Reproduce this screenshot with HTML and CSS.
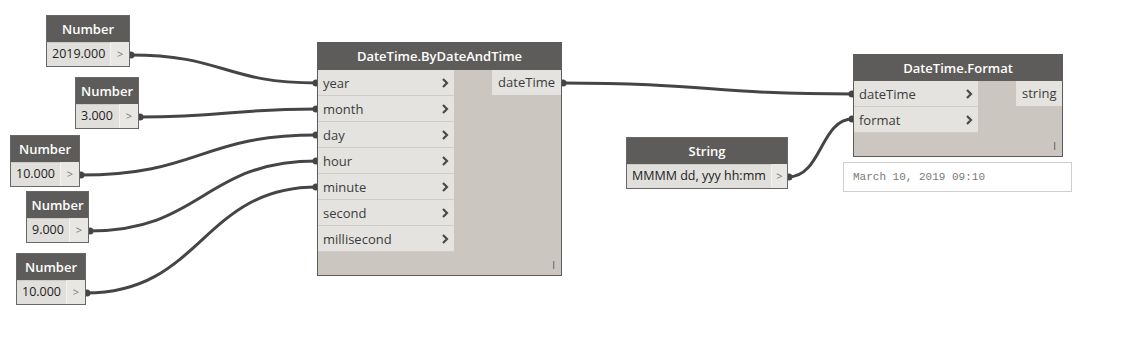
FILE: index.html
```html
<!DOCTYPE html>
<html lang="en">
<head>
    <meta charset="UTF-8">
    <title>Dynamo Graph</title>
    <link rel="stylesheet" href="styles.css">
</head>
<body>
    <div class="canvas">
        <svg class="wires" width="1124" height="352" viewBox="0 0 1124 352">
            <g class="wire">
                <path d="M130 55 C 224 55, 224 83, 317 83"/>
                <path d="M139 117 C 228 117, 228 109, 317 109"/>
                <path d="M80 175 C 200 175, 200 135, 317 135"/>
                <path d="M89 231 C 203 231, 203 161, 317 161"/>
                <path d="M86 293 C 202 293, 202 187, 317 187"/>
                <path d="M562 83 C 708 83, 708 94, 853 94"/>
                <path d="M788 177 C 822 177, 820 119, 853 119"/>
            </g>
            <g class="caps">
                <circle cx="131" cy="55" r="3.5"/>
                <circle cx="140" cy="117" r="3.5"/>
                <circle cx="81" cy="175" r="3.5"/>
                <circle cx="90" cy="231" r="3.5"/>
                <circle cx="87" cy="293" r="3.5"/>
                <circle cx="316" cy="83" r="3.5"/>
                <circle cx="316" cy="109" r="3.5"/>
                <circle cx="316" cy="135" r="3.5"/>
                <circle cx="316" cy="161" r="3.5"/>
                <circle cx="316" cy="187" r="3.5"/>
                <circle cx="563" cy="83" r="3.5"/>
                <circle cx="852" cy="94" r="3.5"/>
                <circle cx="852" cy="119" r="3.5"/>
                <circle cx="789" cy="177" r="3.5"/>
            </g>
        </svg>

        <!-- number inputs -->
        <div class="node num num-1">
            <div class="node-head">Number</div>
            <div class="num-body"><span class="num-value">2019.000</span><span class="num-btn">&gt;</span></div>
        </div>
        <div class="node num num-2">
            <div class="node-head">Number</div>
            <div class="num-body"><span class="num-value">3.000</span><span class="num-btn">&gt;</span></div>
        </div>
        <div class="node num num-3">
            <div class="node-head">Number</div>
            <div class="num-body"><span class="num-value">10.000</span><span class="num-btn">&gt;</span></div>
        </div>
        <div class="node num num-4">
            <div class="node-head">Number</div>
            <div class="num-body"><span class="num-value">9.000</span><span class="num-btn">&gt;</span></div>
        </div>
        <div class="node num num-5">
            <div class="node-head">Number</div>
            <div class="num-body"><span class="num-value">10.000</span><span class="num-btn">&gt;</span></div>
        </div>

        <!-- DateTime.ByDateAndTime -->
        <div class="node func by-date">
            <div class="node-head">DateTime.ByDateAndTime</div>
            <div class="func-body">
                <div class="ports">
                    <div class="port">year<svg class="chev" width="7" height="10" viewBox="0 0 7 10"><polyline points="1,1 5,5 1,9"/></svg></div>
                    <div class="port">month<svg class="chev" width="7" height="10" viewBox="0 0 7 10"><polyline points="1,1 5,5 1,9"/></svg></div>
                    <div class="port">day<svg class="chev" width="7" height="10" viewBox="0 0 7 10"><polyline points="1,1 5,5 1,9"/></svg></div>
                    <div class="port">hour<svg class="chev" width="7" height="10" viewBox="0 0 7 10"><polyline points="1,1 5,5 1,9"/></svg></div>
                    <div class="port">minute<svg class="chev" width="7" height="10" viewBox="0 0 7 10"><polyline points="1,1 5,5 1,9"/></svg></div>
                    <div class="port">second<svg class="chev" width="7" height="10" viewBox="0 0 7 10"><polyline points="1,1 5,5 1,9"/></svg></div>
                    <div class="port">millisecond<svg class="chev" width="7" height="10" viewBox="0 0 7 10"><polyline points="1,1 5,5 1,9"/></svg></div>
                    <div class="footer"></div>
                </div>
                <div class="outputs">
                    <div class="out-port">dateTime</div>
                    <div class="lacing">I</div>
                </div>
            </div>
        </div>

        <!-- String -->
        <div class="node num str">
            <div class="node-head">String</div>
            <div class="num-body"><span class="num-value">MMMM dd, yyy hh:mm</span><span class="num-btn">&gt;</span></div>
        </div>

        <!-- DateTime.Format -->
        <div class="node func fmt">
            <div class="node-head">DateTime.Format</div>
            <div class="func-body">
                <div class="ports">
                    <div class="port">dateTime<svg class="chev" width="7" height="10" viewBox="0 0 7 10"><polyline points="1,1 5,5 1,9"/></svg></div>
                    <div class="port">format<svg class="chev" width="7" height="10" viewBox="0 0 7 10"><polyline points="1,1 5,5 1,9"/></svg></div>
                    <div class="footer"></div>
                </div>
                <div class="outputs">
                    <div class="out-port">string</div>
                    <div class="lacing">I</div>
                </div>
            </div>
        </div>
        <div class="preview">March 10, 2019 09:10</div>
    </div>
</body>
</html>
```

FILE: styles.css
```css
body {
    margin: 0;
    background: #ffffff;
    font-family: 'Open Sans', 'DejaVu Sans', sans-serif;
    color: #3a3a3a;
}
.canvas {
    position: relative;
    width: 1124px;
    height: 352px;
    overflow: hidden;
}
.wires {
    position: absolute;
    left: 0;
    top: 0;
}
.wire path {
    fill: none;
    stroke: #454545;
    stroke-width: 3;
}
.caps circle {
    fill: #454545;
}
.node {
    position: absolute;
    box-sizing: border-box;
    border: 1px solid #5d5b59;
    background: #cbc7c0;
}
.node-head {
    background: #5e5c5a;
    color: #ffffff;
    font-weight: 600;
    font-size: 13px;
    height: 26px;
    line-height: 26px;
    text-align: center;
    white-space: nowrap;
}

/* input nodes */
.num {
    border-color: #6a6866;
}
.num-body {
    display: flex;
    height: 24px;
    font-size: 12.5px;
    line-height: 24px;
    background: #e8e7e3;
}
.num-value {
    flex: 1;
    padding: 0 5px;
    background: #e1dfdb;
    border-right: 1px solid #f3f2ef;
    border-top: 1px solid #cfccc7;
    line-height: 22px;
    color: #222;
    white-space: nowrap;
}
.num-btn {
    width: 18px;
    text-align: center;
    color: #777;
    font-size: 11px;
}
.num-1 { left: 46px; top: 15px; width: 84px; }
.num-2 { left: 75px; top: 77px; width: 64px; }
.num-3 { left: 10px; top: 135px; width: 70px; }
.num-4 { left: 26px; top: 191px; width: 63px; }
.num-5 { left: 16px; top: 253px; width: 70px; }
.str { left: 626px; top: 137px; width: 162px; }

/* function nodes */
.func-body {
    display: flex;
    justify-content: space-between;
}
.ports {
    display: flex;
    flex-direction: column;
}
.port {
    display: flex;
    align-items: center;
    justify-content: space-between;
    height: 25px;
    padding: 0 5px 0 5px;
    background: #e4e3df;
    border-bottom: 1px solid #cfccc6;
    font-size: 13px;
    color: #3c3c3c;
}
.port:last-of-type {
    border-bottom: none;
}
.chev polyline {
    fill: none;
    stroke: #4a4a4a;
    stroke-width: 2.2;
}
.outputs {
    display: flex;
    flex-direction: column;
    justify-content: space-between;
    align-items: flex-end;
}
.out-port {
    height: 25px;
    line-height: 25px;
    padding: 0 6px;
    background: #e4e3df;
    font-size: 13px;
    color: #3c3c3c;
}
.lacing {
    font-size: 10px;
    color: #555;
    padding: 0 6px 4px 0;
}
.by-date { left: 317px; top: 42px; width: 245px; height: 234px; }
.by-date .node-head { height: 27px; line-height: 27px; }
.by-date .ports { width: 136px; }
.by-date .footer { height: 24px; }
.by-date .out-port { width: 57px; text-align: right; }

.fmt { left: 853px; top: 54px; width: 210px; height: 103px; }
.fmt .ports { width: 124px; }
.fmt .footer { height: 24px; }
.fmt .out-port { width: 34px; text-align: right; }

.preview {
    position: absolute;
    left: 843px;
    top: 162px;
    width: 229px;
    height: 30px;
    box-sizing: border-box;
    border: 1px solid #cfcfcf;
    background: #ffffff;
    font-family: 'Liberation Mono', monospace;
    font-size: 11px;
    line-height: 28px;
    color: #7a7a7a;
    padding-left: 9px;
}
```
